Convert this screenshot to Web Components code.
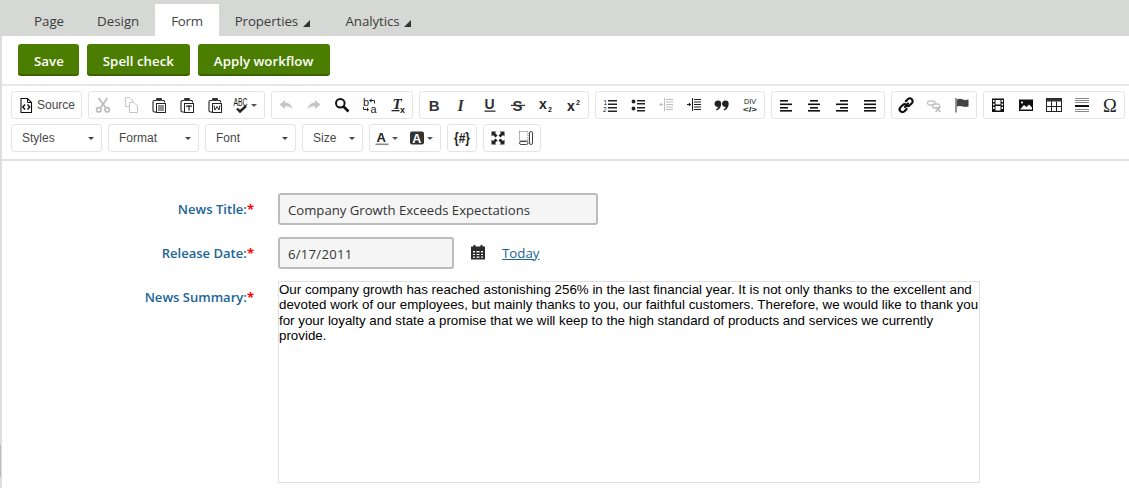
<!DOCTYPE html>
<html lang="en"><head><meta charset="utf-8"><title>News form</title>
<style>
html,body{margin:0;padding:0;background:#fff;overflow:hidden;height:488px}
body{font-family:"Open Sans",sans-serif}
</style></head><body>
<cms-page>
  <cms-tabs slot="tabs">
    <cms-tab>Page</cms-tab><cms-tab>Design</cms-tab><cms-tab active>Form</cms-tab><cms-tab menu>Properties</cms-tab><cms-tab menu>Analytics</cms-tab>
  </cms-tabs>
  <cms-actions>
    <cms-button>Save</cms-button><cms-button>Spell check</cms-button><cms-button>Apply workflow</cms-button>
  </cms-actions>
  <ck-toolbar>
    <ck-row>
      <ck-group><ck-btn icon="source" wide>Source</ck-btn></ck-group>
      <ck-group><ck-btn icon="cut" off></ck-btn><ck-btn icon="copy" off></ck-btn><ck-btn icon="paste"></ck-btn><ck-btn icon="pastet"></ck-btn><ck-btn icon="pastew"></ck-btn><ck-btn icon="spell" arrow></ck-btn></ck-group>
      <ck-group><ck-btn icon="undo" off></ck-btn><ck-btn icon="redo" off></ck-btn><ck-btn icon="find"></ck-btn><ck-btn icon="replace"></ck-btn><ck-btn icon="clear"></ck-btn></ck-group>
      <ck-group><ck-btn icon="bold"></ck-btn><ck-btn icon="italic"></ck-btn><ck-btn icon="under"></ck-btn><ck-btn icon="strike"></ck-btn><ck-btn icon="sub"></ck-btn><ck-btn icon="sup"></ck-btn></ck-group>
      <ck-group><ck-btn icon="ol"></ck-btn><ck-btn icon="ul"></ck-btn><ck-btn icon="outdent" off></ck-btn><ck-btn icon="indent"></ck-btn><ck-btn icon="quote"></ck-btn><ck-btn icon="div"></ck-btn></ck-group>
      <ck-group><ck-btn icon="al"></ck-btn><ck-btn icon="ac"></ck-btn><ck-btn icon="ar"></ck-btn><ck-btn icon="aj"></ck-btn></ck-group>
      <ck-group><ck-btn icon="link"></ck-btn><ck-btn icon="unlink" off></ck-btn><ck-btn icon="flag"></ck-btn></ck-group>
      <ck-group><ck-btn icon="film"></ck-btn><ck-btn icon="image"></ck-btn><ck-btn icon="table"></ck-btn><ck-btn icon="hr"></ck-btn><ck-btn icon="omega"></ck-btn></ck-group>
    </ck-row>
    <ck-row>
      <ck-combo w="91">Styles</ck-combo><ck-combo w="91">Format</ck-combo><ck-combo w="91">Font</ck-combo><ck-combo w="61">Size</ck-combo>
      <ck-group><ck-btn icon="fore" arrow></ck-btn><ck-btn icon="back" arrow></ck-btn></ck-group>
      <ck-group><ck-btn icon="macro"></ck-btn></ck-group>
      <ck-group><ck-btn icon="max"></ck-btn><ck-btn icon="blocks"></ck-btn></ck-group>
    </ck-row>
  </ck-toolbar>
  <cms-form>
    <form-row label="News Title:"><text-field w="320">Company Growth Exceeds Expectations</text-field></form-row>
    <form-row label="Release Date:"><text-field w="176" spaced>6/17/2011</text-field><date-tools></date-tools></form-row>
    <form-row label="News Summary:" top><rich-area>Our company growth has reached astonishing 256% in the last financial year. It is not only thanks to the excellent and devoted work of our employees, but mainly thanks to you, our faithful customers. Therefore, we would like to thank you for your loyalty and state a promise that we will keep to the high standard of products and services we currently provide.</rich-area></form-row>
  </cms-form>
</cms-page>
<script>
const T=(x,y,s,t,extra='')=>`<text x="${x}" y="${y}" font-size="${s}" ${extra}>${t}</text>`;
const L='font-family="Liberation Sans" ';
const lines=(rows,c='#111')=>rows.map(r=>`<rect x="${r[0]}" y="${r[1]}" width="${r[2]}" height="${r[3]||1.5}" fill="${c}"/>`).join('');
const clip=(inner)=>`<path d="M5 3.5H3.5Q2 3.5 2 5V13.5Q2 15 3.5 15H5" fill="none" stroke="#222" stroke-width="1.1"/><path d="M11 3.5h1.5q1 0 1 1v1" fill="none" stroke="#222" stroke-width="1.1"/><rect x="5" y="1" width="6" height="3" rx="1" fill="#333"/><rect x="5.5" y="6.5" width="9" height="9" fill="#fff" stroke="#222"/>${inner}`;
const q=(d)=>`<path transform="translate(${d} 0)" d="M4 3.5a3.2 3.2 0 0 1 3.2 3.2C7.2 10 5.5 12.5 2.5 13.5L2 12.5C3.5 11.5 4.2 10.6 4.4 9.8A3.2 3.2 0 1 1 4 3.5Z" fill="#222"/>`;
const ICONS={
source:`<path d="M3 1.5H9.5L13.5 5.5V15.5H3Z" fill="#fff" stroke="#111" stroke-width="1.1"/><path d="M9.5 1.5V5.5H13.5" fill="none" stroke="#111"/><path d="M7 7.5 4.8 10 7 12.5M9.5 7.5 11.7 10 9.5 12.5" fill="none" stroke="#111" stroke-width="1.4"/>`,
cut:`<g fill="none" stroke="#bbb" stroke-width="1.7"><path d="M3.5 1 10.5 10.5M12.5 1 5.5 10.5"/><circle cx="3.8" cy="12.8" r="2.2"/><circle cx="12.2" cy="12.8" r="2.2"/></g>`,
copy:`<g fill="#fff" stroke="#c4c4c4"><path d="M2.5 .5H7L9.5 3V9.5H2.5Z"/><path d="M6.5 5.5H11L14.5 9V15.5H6.5Z"/></g>`,
paste:clip(lines([[7,8.5,6,1],[7,10.5,6,1],[7,12.5,6,1]],'#222')),
pastet:clip(lines([[7,8.5,6,1.2],[9.4,8.5,1.2,5]],'#222')),
pastew:clip(`<path d="M7 8.5 8 13 10 9.5 12 13 13 8.5" fill="none" stroke="#222"/>`),
spell:T(.5,8.5,10.5,'ABC',L+'fill="#111" textLength="14" lengthAdjust="spacingAndGlyphs"')+`<path d="M4 11.5 7 14.5 13 9" fill="none" stroke="#222" stroke-width="2.4"/>`,
undo:`<path d="M7 3 1.5 7.5 7 12V9.3C10 9.1 12.5 10 14.5 12.5 14 8.5 11 5.7 7 5.6Z" fill="#c6c6c6"/>`,
redo:`<path d="M9 3 14.5 7.5 9 12V9.3C6 9.1 3.5 10 1.5 12.5 2 8.5 5 5.7 9 5.6Z" fill="#c6c6c6"/>`,
find:`<circle cx="6.3" cy="6.3" r="4.3" fill="none" stroke="#111" stroke-width="2"/><path d="M9.5 9.5 14.5 14.5" stroke="#111" stroke-width="2.6"/>`,
replace:T(1,8.5,11,'b',L+'fill="#222"')+T(8.5,15.5,11,'a',L+'fill="#222"')+`<path d="M8 3.5h4.5v3M1.5 10v2.5H6" fill="none" stroke="#222"/><path d="M7 3.5 9.5 1.5v4ZM7 12.5l-2-2v4Z" fill="#222"/>`,
clear:T(2.5,11.5,15,'T','font-family="Liberation Serif" font-weight="700" font-style="italic" fill="#222"')+T(10,15.5,9,'x',L+'font-weight="700" fill="#222"')+`<rect x="1.5" y="13" width="8" height="1.3" fill="#222"/>`,
bold:T(2.7,13.5,15,'B',L+'font-weight="700" fill="#333"'),
italic:T(3.5,13.5,16,'I','font-family="Liberation Serif" font-weight="700" font-style="italic" fill="#333"'),
under:T(2.5,12,14,'U',L+'font-weight="700" fill="#333"')+`<rect x="2.5" y="13.5" width="11" height="1.3" fill="#333"/>`,
strike:T(2.5,13.5,15,'S',L+'font-weight="700" fill="#333"')+`<rect x="1" y="7.8" width="14" height="1.2" fill="#333"/>`,
sub:T(1,12,14,'x',L+'font-weight="700" fill="#222"')+T(10,15,7,'2',L+'font-weight="700" fill="#222"'),
sup:T(1,14,14,'x',L+'font-weight="700" fill="#222"')+T(10,7.5,7,'2',L+'font-weight="700" fill="#222"'),
ol:T(1.5,7.5,6.5,'1',L+'fill="#222"')+T(1,14.5,6.5,'2',L+'fill="#222"')+lines([[6,3,9],[6,6.5,9],[6,10,9],[6,13.5,9]],'#222'),
ul:`<circle cx="3.5" cy="4.5" r="1.9" fill="#222"/><circle cx="3.5" cy="11.5" r="1.9" fill="#222"/>`+lines([[7,3,8],[7,6,8],[7,10,8],[7,13,8]],'#222'),
outdent:lines([[8,2,7,1],[8,4.5,7,1],[8,7,7,1],[8,9.5,7,1],[8,12,7,1],[6,1,1,13]],'#bbb')+`<path d="M1 7.5 3.5 5.5V7H5V8H3.5V9.5Z" fill="#bbb"/>`,
indent:lines([[8,2,7,1],[8,4.5,7,1],[8,7,7,1],[8,9.5,7,1],[8,12,7,1],[6,1,1,13]],'#222')+`<path d="M5.3 7.5 2.8 5.5V7H1V8H2.8V9.5Z" fill="#222"/>`,
quote:q(0)+q(7.5),
div:T(2,6.8,8,'DIV',L+'fill="#222" textLength="12" lengthAdjust="spacingAndGlyphs"')+T(1,15,7.5,'&lt;/&gt;',L+'font-weight="700" fill="#222" textLength="14" lengthAdjust="spacingAndGlyphs"'),
al:lines([[2,3,8,1.6],[2,6.5,12,1.6],[2,10,8,1.6],[2,13,12,1.6]]),
ac:lines([[4,3,8,1.6],[2,6.5,12,1.6],[4,10,8,1.6],[2,13,12,1.6]]),
ar:lines([[6,3,8,1.6],[2,6.5,12,1.6],[6,10,8,1.6],[2,13,12,1.6]]),
aj:lines([[2,3,12,1.6],[2,6.5,12,1.6],[2,10,12,1.6],[2,13,12,1.6]]),
link:`<g fill="none" stroke="#111" stroke-width="2.2" stroke-linecap="round"><path d="M7 10 10 6.5"/><path d="M7.8 4.2 9.8 2.2a2.8 2.8 0 0 1 4 4L11.6 8.3a2.8 2.8 0 0 1-3.2.5"/><path d="M8.2 7.7a2.8 2.8 0 0 0-3.4.3L2.5 10.2a2.8 2.8 0 0 0 4 4L8.6 12"/></g>`,
unlink:`<g fill="none" stroke="#c4c4c4" stroke-width="1.3"><rect x="1.5" y="4" width="7.5" height="4" rx="2"/><rect x="6.5" y="7" width="7" height="4" rx="2"/></g><path d="M9.5 10 14.5 15M14.5 10 9.5 15" stroke="#bbb" stroke-width="1.4"/>`,
flag:`<rect x="1.5" y="1" width="1" height="14.5" fill="#222"/><path d="M3 2.5C5 1.5 7 1.7 9 2.5S12.5 3 14.5 2.5V9.5C12.5 10 11 10 9 9.5S5 8.5 3 9.5Z" fill="#444"/>`,
film:`<path fill-rule="evenodd" d="M2 1.5H14V15H2ZM3 3V5H4.5V3ZM3 6.5V8.5H4.5V6.5ZM3 10V12H4.5V10ZM11.5 3V5H13V3ZM11.5 6.5V8.5H13V6.5ZM11.5 10V12H13V10ZM5.5 3V7.5H10.5V3ZM5.5 9V13.5H10.5V9Z" fill="#111"/>`,
image:`<rect x="1" y="2.5" width="14" height="11.5" fill="#111"/><path d="M2 12.5 6 8 8.5 10 11 7.5 14 10.5V12.5Z" fill="#fff"/><circle cx="4" cy="5.5" r="1.1" fill="#fff"/>`,
table:`<rect x="0.5" y="1.5" width="15" height="13" fill="#fff" stroke="#222"/><rect x="0.5" y="1.5" width="15" height="3" fill="#333"/><path d="M5.5 4.5V14.5M10.5 4.5V14.5M.5 9.5H15.5" stroke="#222"/>`,
hr:lines([[1,1,14,1],[1,3,14,1],[1,5,14,1],[1,12,14,1],[1,14,14,1]],'#888')+`<rect x="1" y="8" width="14" height="2" fill="#111"/>`,
omega:T(1,15,18.5,'Ω','font-family="Liberation Serif" font-weight="400" fill="#222"'),
fore:T(2.5,11.5,13,'A',L+'font-weight="700" fill="#222"')+`<rect x="1.5" y="13.5" width="13" height="1.6" fill="#888"/>`,
back:`<rect x="1" y="1.5" width="14" height="13" rx="2" fill="#333"/>`+T(3.2,12.5,12.5,'A',L+'font-weight="700" fill="#fff"'),
macro:T(0,13,14,'{#}',L+'font-weight="700" fill="#222" textLength="16" lengthAdjust="spacingAndGlyphs"'),
max:`<path d="M1.5 1.5H6.5L5 3 7.5 5.5 5.5 7.5 3 5 1.5 6.5ZM14.5 1.5V6.5L13 5 10.5 7.5 8.5 5.5 11 3 9.5 1.5ZM1.5 14.5V9.5L3 11 5.5 8.5 7.5 10.5 5 13 6.5 14.5ZM14.5 14.5H9.5L11 13 8.5 10.5 10.5 8.5 13 11 14.5 9.5Z" fill="#222"/>`,
blocks:`<rect x="1.5" y="1.5" width="8.5" height="9" fill="none" stroke="#666" stroke-dasharray="1 1"/><rect x="11.5" y="1.5" width="3" height="13" rx="1.5" fill="#fff" stroke="#444"/><rect x="1.5" y="11.5" width="8.5" height="3" rx="1.5" fill="#fff" stroke="#444"/>`
};
const def=(name,html,cls)=>{const t=document.createElement('template');t.innerHTML=html;
 customElements.define(name,class extends HTMLElement{constructor(){super();this.attachShadow({mode:'open'}).append(t.content.cloneNode(true));}connectedCallback(){cls&&cls.call(this,this.shadowRoot);}});};
def('cms-page',`<style>:host{display:block;position:relative;width:1129px;height:488px;overflow:hidden;box-sizing:border-box}
.body{border-left:2px solid #dcdedb;height:452px;box-sizing:border-box}
.thumb{position:absolute;left:0;top:445px;width:1px;height:32px;background:#bdbdbd}</style><slot name="tabs"></slot><div class="body"><slot></slot></div><span class="thumb"></span>`);
def('cms-tabs',`<style>:host{display:flex;height:36px;background:#d6d8d5;padding:4px 0 0 18px;box-sizing:border-box;align-items:stretch}</style><slot></slot>`);
def('cms-tab',`<style>:host{display:flex;align-items:center;padding:2px 16px 0 16px;font:13.3px "Open Sans",sans-serif;color:#3c3c3c;height:32px;box-sizing:border-box;white-space:nowrap}
:host([active]){background:#fff;color:#444;letter-spacing:-.3px}
:host(:first-child){padding-right:17px}
:host([menu]){padding-right:19.5px;letter-spacing:-.1px}
.m{display:none;width:0;height:0;border-left:7px solid transparent;border-bottom:7px solid #333;margin:4px 0 0 5px}
:host([menu]) .m{display:block}</style><slot></slot><span class="m"></span>`);
def('cms-actions',`<style>:host{display:flex;gap:8px;padding:8px 0 8px 16px}</style><slot></slot>`);
def('cms-button',`<style>:host{display:block;height:32px;box-sizing:border-box;padding:0 16px;background:#4a7d00;border-bottom:2px solid #3a6200;border-radius:3px;color:#fff;font:600 13.3px/35px "Open Sans",sans-serif;white-space:nowrap}
:host(:first-child){padding-right:15px}:host(:last-child){padding-right:17px}</style><slot></slot>`);
def('ck-toolbar',`<style>:host{display:flex;flex-direction:column;gap:5px;border-top:2px solid #e8e8e8;border-bottom:2px solid #e2e2e2;padding:5px 0 7px 9px;height:77px;box-sizing:border-box;width:1127px}</style><slot></slot>`);
def('ck-row',`<style>:host{display:flex;gap:6px;height:28px}</style><slot></slot>`);
def('ck-group',`<style>:host{display:flex;height:28px;box-sizing:border-box;border:1px solid #e4e4e4;border-radius:3px;background:#fff}</style><slot></slot>`);
def('ck-btn',`<style>:host{display:flex;align-items:center;justify-content:center;width:28px;height:26px;box-sizing:border-box;font:12px "Liberation Sans",sans-serif;color:#474747}
:host([wide]){width:69px;padding:0 6px;gap:3px;justify-content:flex-start}
:host([arrow]){width:35px;padding:0 3px 0 4px;justify-content:flex-start}
svg{width:16px;height:16px;flex:none;display:block;overflow:visible}
.a{display:none;width:0;height:0;border:3px solid transparent;border-top:3px solid #555;border-bottom:0;margin-left:2px}
:host([arrow]) .a{display:block}</style><svg viewBox="0 0 16 16" aria-hidden="true"></svg><slot></slot><span class="a"></span>`,function(r){r.querySelector('svg').innerHTML=ICONS[this.getAttribute('icon')]||'';});
def('ck-combo',`<style>:host{display:flex;align-items:center;justify-content:space-between;height:28px;box-sizing:border-box;border:1px solid #e4e4e4;border-radius:3px;padding:0 7px 0 10px;font:12px "Liberation Sans",sans-serif;color:#474747}
.a{width:0;height:0;border:3px solid transparent;border-top:3px solid #444;border-bottom:0}</style><slot></slot><span class="a"></span>`,function(){this.style.width=this.getAttribute('w')+'px';});
def('cms-form',`<style>:host{display:flex;flex-direction:column;gap:12px;padding:32px 0 0 0}</style><slot></slot>`);
def('form-row',`<style>:host{display:flex;align-items:center}
:host([top]){align-items:flex-start}
label{width:276px;flex:none;text-align:right;padding-right:24px;box-sizing:border-box;font:600 13.05px/22px "Open Sans",sans-serif;color:#1c6598;position:relative;white-space:nowrap}
b{color:#f00;font-weight:700}
:host([top]) label{top:5px}
.c{display:flex;align-items:center}</style><label><span></span><b>*</b></label><div class="c"><slot></slot></div>`,function(r){r.querySelector('span').textContent=this.getAttribute('label');});
def('text-field',`<style>:host{display:block;height:32px;box-sizing:border-box;border:2px solid #bcbcbc;border-radius:3px;background:#f5f5f5;padding:0 8px;font:13.15px/30px "Open Sans",sans-serif;color:#333;white-space:nowrap}
:host([spaced]){letter-spacing:.25px}</style><slot></slot>`,function(){this.style.width=this.getAttribute('w')+'px';});
def('date-tools',`<style>:host{display:flex;align-items:center;margin-left:16px;gap:16px;font:13.3px "Open Sans",sans-serif}
a{color:#1c6598;text-decoration:underline}
svg{width:16px;height:16px;display:block;margin-top:-2px}</style><svg viewBox="0 0 16 16" aria-hidden="true"><path fill-rule="evenodd" fill="#2b2b2b" d="M1 2.5H3.5V1H5.5V2.5H10.5V1H12.5V2.5H15V15.5H1ZM3 7V8.5H5V7ZM6.5 7V8.5H9.5V7ZM11 7V8.5H13V7ZM3 10V11H5V10ZM6.5 10V11H9.5V10ZM11 10V11H13V10ZM3 12.5V13.7H5V12.5ZM6.5 12.5V13.7H9.5V12.5ZM11 12.5V13.7H13V12.5Z"/></svg><a href="#">Today</a>`);
def('rich-area',`<style>:host{display:block;width:702px;height:202px;box-sizing:border-box;border:1px solid #e0e0e0;padding:0;font:13.33px/15.4px "Liberation Sans",Arial,sans-serif;color:#000}</style><slot></slot>`);
</script>
</body></html>
